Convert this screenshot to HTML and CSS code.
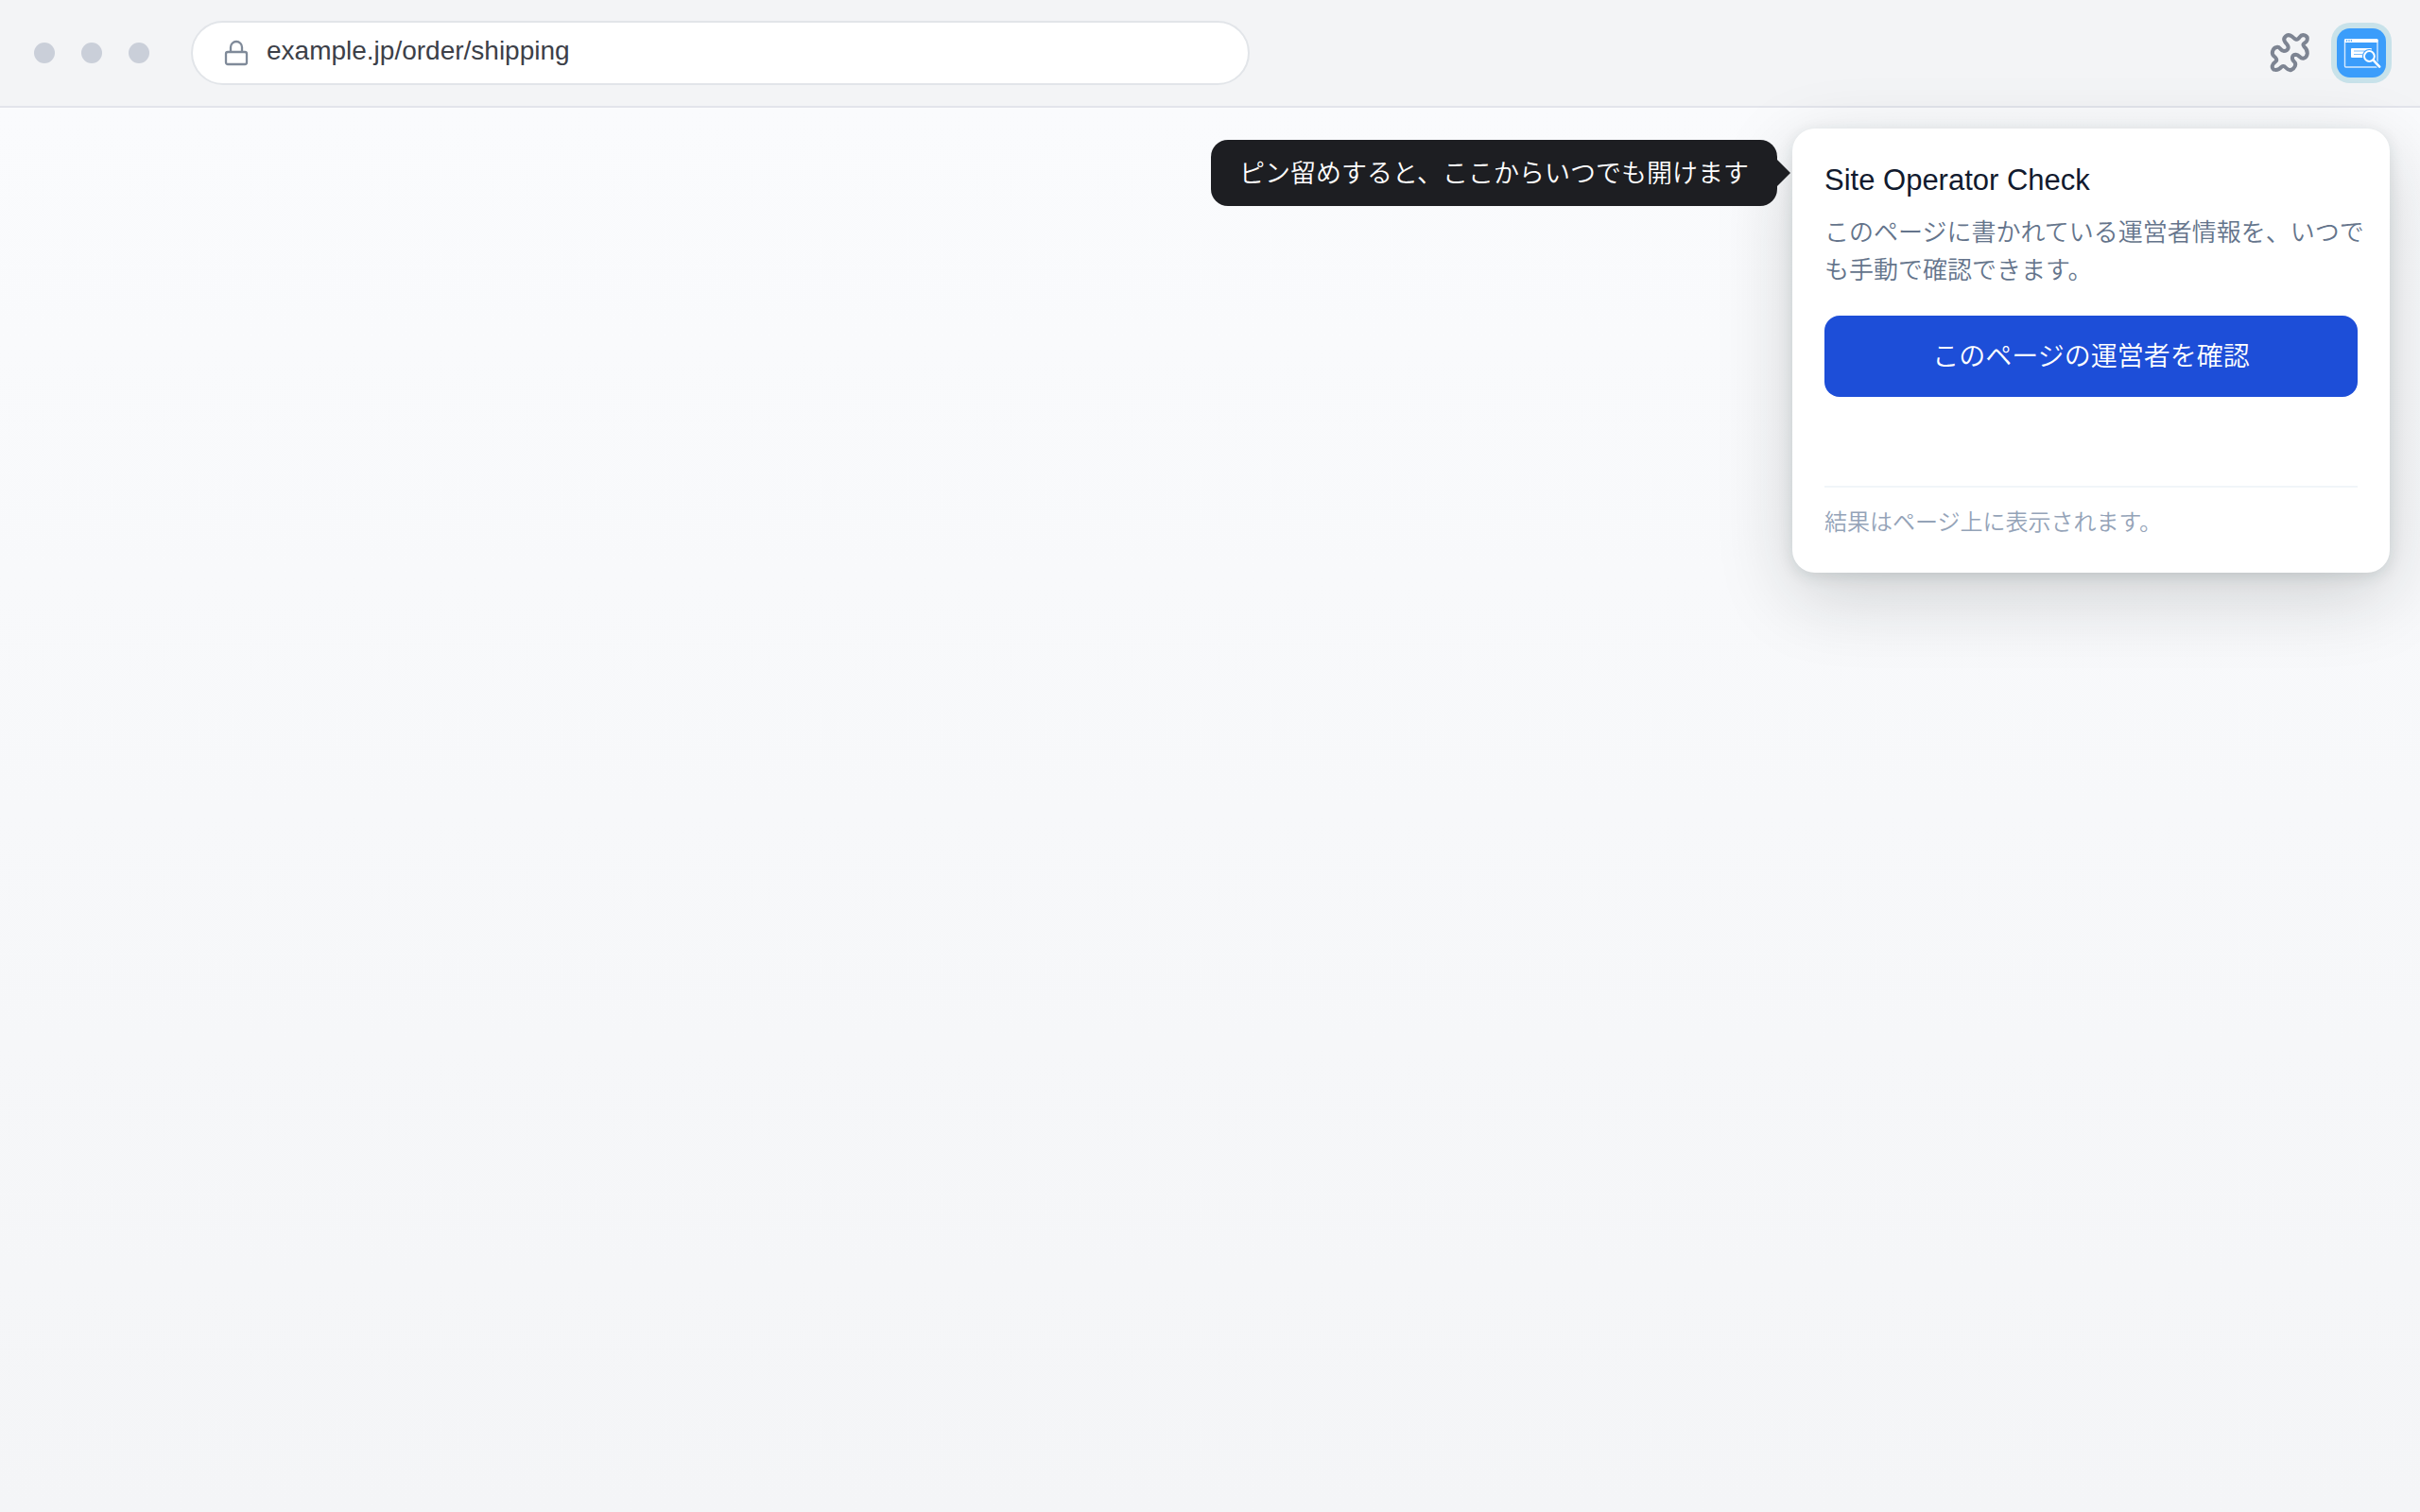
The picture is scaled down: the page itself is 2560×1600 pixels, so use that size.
FILE: index.html
```
<!DOCTYPE html>
<html lang="ja">
<head>
    <meta charset="UTF-8">
    <meta name="viewport" content="width=device-width, initial-scale=1.0">
    <title>Site Operator Check</title>
    <link rel="stylesheet" href="styles.css">
</head>
<body>
    <header class="toolbar">
        <div class="dots">
            <span class="dot"></span>
            <span class="dot"></span>
            <span class="dot"></span>
        </div>
        <label class="address">
            <svg class="lock" viewBox="0 0 28 28" fill="none" stroke="currentColor" stroke-width="2.3">
                <rect x="3" y="13" width="22" height="13" rx="2"/>
                <path d="M8 13V8a6 6 0 0 1 12 0v5"/>
            </svg>
            <input class="url" type="text" value="example.jp/order/shipping" aria-label="URL">
        </label>
        <div class="actions">
            <button class="icon-btn" type="button" aria-label="拡張機能">
                <svg class="puzzle" viewBox="0 0 150 144" fill="none" stroke="currentColor" stroke-width="12" stroke-linejoin="round">
                    <path d="M58 38C48 24 64 8 80 20C90 30 97 34 104 22C112 10 132 16 128 31C126 41 108 42 118 52C134 66 130 84 117 89C106 93 104 78 92 77C80 77 77 90 86 99C96 107 88 122 77 126C60 130 60 107 47 116C40 124 32 128 22 125C14 119 16 107 26 101C36 94 28 87 22 82C12 72 20 56 31 54C42 50 42 65 54 66C67 66 72 55 64 45Z"/>
                </svg>
            </button>
            <button class="ext-btn" type="button" aria-label="Site Operator Check">
                <svg class="ext-icon" viewBox="0 0 52 52" fill="none">
                    <!-- window -->
                    <rect x="8.5" y="12" width="34.5" height="29" rx="1" stroke="#d6eafe" stroke-width="1.4"/>
                    <rect x="8" y="11.3" width="35.5" height="3.6" rx="1" fill="#fff"/>
                    <path d="M10 13h1.2M12.4 13h1.2M14.8 13h1.2" stroke="#3b9dfb" stroke-width="1.4"/>
                    <!-- card with two lines -->
                    <rect x="15" y="21" width="22" height="10" rx="1" fill="#fff"/>
                    <path d="M18 24h14M18 27.5h9" stroke="#7dbefc" stroke-width="1.2"/>
                    <!-- magnifier -->
                    <circle cx="34.4" cy="29.5" r="7.4" fill="#3b9dfb"/>
                    <path d="M38 33l7 7.5" stroke="#3b9dfb" stroke-width="4.6"/>
                    <circle cx="34.4" cy="29.5" r="5.4" stroke="#fff" stroke-width="2"/>
                    <path d="M38.6 33.6l6.6 7" stroke="#fff" stroke-width="2.6" stroke-linecap="round"/>
                </svg>
            </button>
        </div>
    </header>

    <main class="page">
        <div class="tip">ピン留めすると、ここからいつでも開けます</div>
        <section class="popup">
            <h1 class="popup-title">Site Operator Check</h1>
            <p class="popup-text">このページに書かれている運営者情報を、いつで<br>も手動で確認できます。</p>
            <button class="check-btn" type="button">このページの運営者を確認</button>
            <p class="popup-note">結果はページ上に表示されます。</p>
        </section>
    </main>
</body>
</html>
```
FILE: styles.css
```
* {
    box-sizing: border-box;
}
body {
    margin: 0;
    min-height: 100vh;
    display: flex;
    flex-direction: column;
    font-family: "Liberation Sans", "Noto Sans CJK JP", sans-serif;
    font-weight: 350;
    background: #f4f5f7;
}
button {
    font-family: inherit;
    font-weight: inherit;
    border: none;
    padding: 0;
    cursor: pointer;
}

/* toolbar */
.toolbar {
    display: flex;
    align-items: center;
    height: 114px;
    padding: 0 36px;
    background: #f3f4f6;
    border-bottom: 2px solid #e2e4eb;
}
.dots {
    display: flex;
    gap: 28px;
    margin-right: 44px;
}
.dot {
    width: 22px;
    height: 22px;
    border-radius: 50%;
    background: #cacfd9;
}
.address {
    flex: 0 1 1120px;
    display: flex;
    align-items: center;
    gap: 18px;
    height: 68px;
    padding: 0 32px;
    background: #fff;
    border: 2px solid #e2e5e9;
    border-radius: 34px;
}
.lock {
    width: 28px;
    height: 28px;
    color: #7f8a99;
}
.url {
    flex: 1;
    border: none;
    outline: none;
    padding: 0 0 4px;
    background: none;
    font-family: inherit;
    font-size: 28px;
    color: #3c4048;
}
.actions {
    display: flex;
    align-items: center;
    gap: 24px;
    margin-left: auto;
}
.icon-btn {
    display: flex;
    background: none;
    color: #7d8492;
}
.puzzle {
    width: 50px;
    height: 48px;
}
.ext-btn {
    display: flex;
    border-radius: 14px;
    background: #3b9dfb;
    box-shadow: 0 0 0 6px #c8e2ea;
}
.ext-icon {
    width: 52px;
    height: 52px;
}

/* page area */
.page {
    flex: 1;
    display: flex;
    justify-content: flex-end;
    align-items: flex-start;
    gap: 16px;
    padding: 22px 32px;
    background: linear-gradient(#fafbfd, #f4f5f7);
}
.tip {
    position: relative;
    margin-top: 12px;
    padding: 2px 30px 0;
    border-radius: 18px;
    background: #1d1e22;
    color: #fff;
    font-size: 27px;
    line-height: 68px;
    white-space: nowrap;
}
.tip::after {
    content: "";
    position: absolute;
    left: 100%;
    top: 50%;
    margin-top: -14px;
    border-style: solid;
    border-width: 14px 0 14px 14px;
    border-color: transparent transparent transparent #1d1e22;
}
.popup {
    width: 632px;
    padding: 34px;
    border-radius: 24px;
    background: #fff;
    box-shadow: 0 24px 80px rgba(20, 30, 30, 0.18), 0 4px 16px rgba(20, 50, 50, 0.12);
}
.popup-title {
    margin: 0 0 14px;
    font-size: 31px;
    font-weight: 400;
    line-height: 42px;
    color: #111a2e;
}
.popup-text {
    margin: 0 0 28px;
    font-size: 26px;
    line-height: 40px;
    color: #64748b;
    white-space: nowrap;
}
.check-btn {
    display: block;
    width: 100%;
    height: 86px;
    padding-bottom: 4px;
    border-radius: 16px;
    background: #1d4ed8;
    color: #fff;
    font-size: 28px;
}
.popup-note {
    margin: 94px 0 0;
    padding-top: 18px;
    border-top: 2px solid #f1f5f9;
    font-size: 24px;
    line-height: 38px;
    color: #94a3b8;
}
```
